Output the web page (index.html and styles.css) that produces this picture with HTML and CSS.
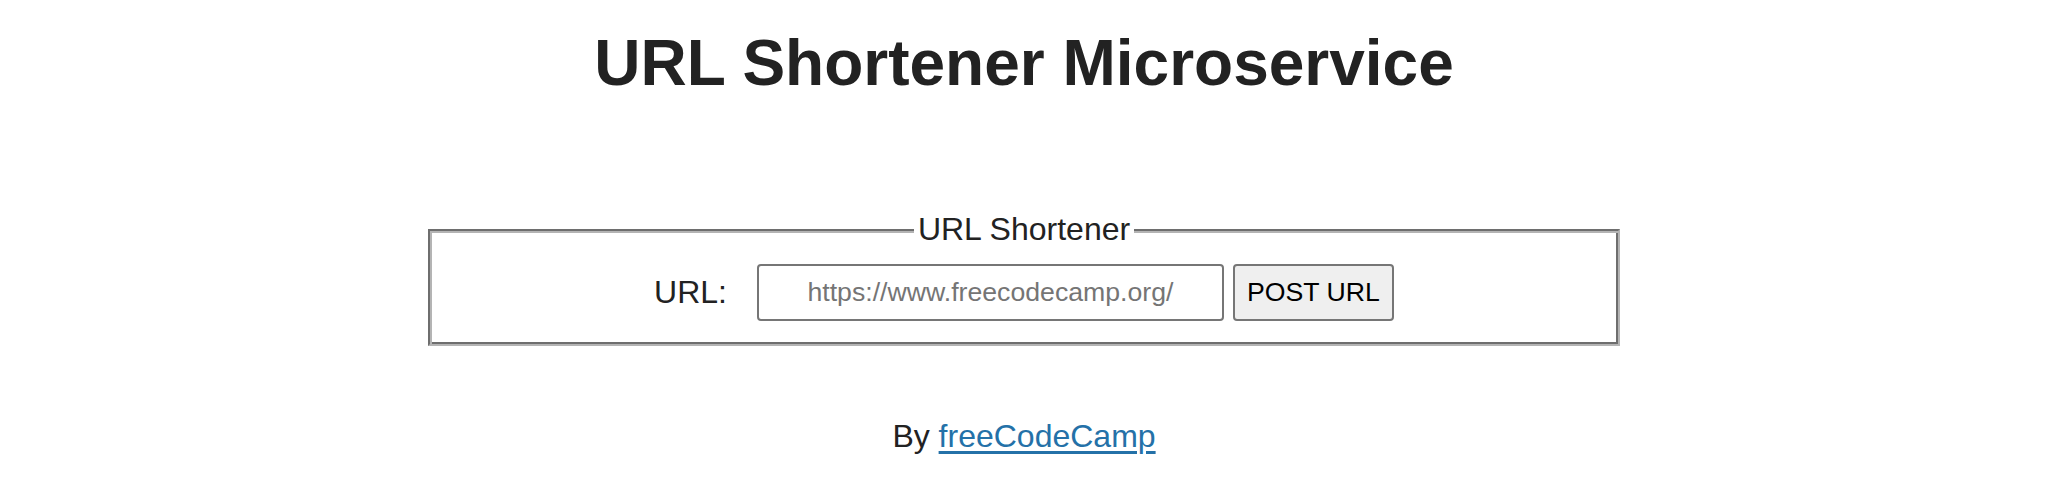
FILE: index.html
```html
<!DOCTYPE html>
<html lang="en">
<head>
<meta charset="utf-8">
<title>URL Shortener Microservice</title>
<link rel="stylesheet" href="styles.css">
</head>
<body>
  <h1 class="title">URL Shortener Microservice</h1>
  <main class="container">
    <form class="shortener" action="/api/shorturl" method="POST">
      <fieldset class="box">
        <legend class="box-legend">URL Shortener</legend>
        <div class="row">
          <label class="label" for="url_input">URL:</label>
          <input class="url-input" id="url_input" type="text" name="url" placeholder="https://www.freecodecamp.org/">
          <button class="submit" type="submit">POST URL</button>
        </div>
      </fieldset>
    </form>
  </main>
  <footer class="footer">
    <p class="by">By <a class="link" href="#">freeCodeCamp</a></p>
  </footer>
</body>
</html>
```

FILE: styles.css
```css
html, body {
  margin: 0;
  padding: 0;
  background: #ffffff;
}
body {
  font-family: "Liberation Sans", Arial, sans-serif;
  color: #222222;
  text-align: center;
}
.title {
  margin: 26px 0 0;
  font-size: 64px;
  font-weight: bold;
  line-height: normal;
}
.container {
  display: flex;
  justify-content: center;
  margin-top: 111px;
}
.shortener {
  margin: 0;
}
.box {
  box-sizing: border-box;
  width: 1192px;
  margin: 0;
  padding: 16px 24px 23px;
  border-style: solid;
  border-width: 2px;
  border-color: #6e6e6e #b4b4b4 #b4b4b4 #6e6e6e;
  box-shadow: inset 2px 2px 0 #b4b4b4, inset -2px -2px 0 #6e6e6e;
}
.box-legend {
  margin: 0 auto;
  padding: 0 4px;
  background: #ffffff;
  font-size: 32px;
  line-height: normal;
}
.row {
  display: flex;
  align-items: center;
  justify-content: center;
}
.label {
  font-size: 32px;
  line-height: normal;
  margin-right: 30px;
}
.url-input {
  box-sizing: border-box;
  width: 467px;
  height: 57px;
  margin: 0;
  padding: 0 4px;
  border: 2px solid #767676;
  border-radius: 4px;
  font-family: "Liberation Sans", Arial, sans-serif;
  font-size: 26.67px;
  text-align: center;
  color: #222222;
  background: #ffffff;
}
.url-input::placeholder {
  color: #757575;
}
.submit {
  box-sizing: border-box;
  width: 161px;
  height: 57px;
  margin: 0 0 0 9px;
  padding: 0 12px;
  border: 2px solid #767676;
  border-radius: 4px;
  background: #efefef;
  color: #000000;
  font-family: "Liberation Sans", Arial, sans-serif;
  font-size: 26.67px;
}
.footer {
  margin-top: 72px;
}
.by {
  margin: 0;
  font-size: 32px;
  line-height: normal;
}
.link {
  color: #2471a8;
  text-decoration: underline;
  text-underline-offset: 4px;
}
```
